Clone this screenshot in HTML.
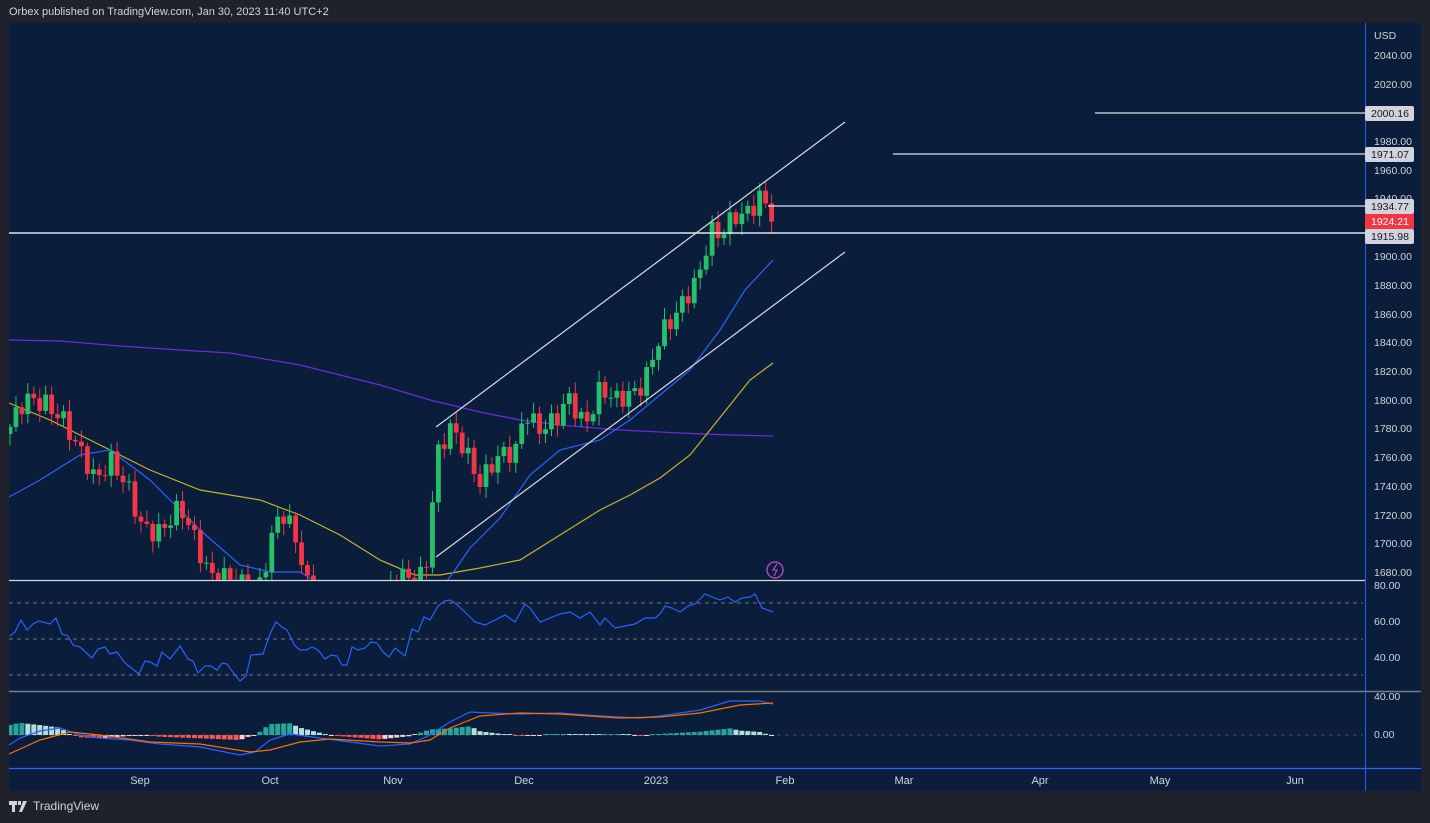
<!DOCTYPE html>
<html><head><meta charset="utf-8"><style>
html,body{margin:0;padding:0;background:#1f222c;width:1430px;height:823px;overflow:hidden;font-family:"Liberation Sans",sans-serif}
.hdr{position:absolute;left:9px;top:6px;font-size:11px;color:#d1d4dc}
.ft{position:absolute;left:9px;top:799px;font-size:12px;color:#d1d4dc;display:flex;align-items:center;gap:4px}
svg{position:absolute;left:0;top:0}
</style></head><body>
<div class="hdr">Orbex published on TradingView.com, Jan 30, 2023 11:40 UTC+2</div>
<div class="ft"><svg width="20" height="11" viewBox="0 0 20 11" style="position:static"><path d="M0 0h8v4H6v7H3V4H0z M9 0h3v4H9z M14 0h4l-5 11h-3z" fill="#d1d4dc"/></svg>TradingView</div>
<svg id="s" width="1430" height="823" xmlns="http://www.w3.org/2000/svg" font-family="Liberation Sans, sans-serif" font-size="11">
<defs><clipPath id="cp"><rect x="9" y="23" width="1356" height="557"/></clipPath>
<clipPath id="cp2"><rect x="9" y="581" width="1356" height="110"/></clipPath>
<clipPath id="cp3"><rect x="9" y="692" width="1356" height="76"/></clipPath></defs>
<rect x="9" y="23" width="1412" height="768" fill="#0a1d3a"/>
<line x1="9" y1="580.5" x2="1365" y2="580.5" stroke="#d8dbe2" stroke-width="1.2"/>
<line x1="9" y1="691.5" x2="1421" y2="691.5" stroke="#787b86" stroke-width="1.5"/>
<line x1="9" y1="768.5" x2="1421" y2="768.5" stroke="#2962ff" stroke-width="1.2"/>
<line x1="1365.5" y1="23" x2="1365.5" y2="791" stroke="#2962ff" stroke-width="1"/>
<g stroke="#787b86" stroke-dasharray="4,4" stroke-width="1">
<line x1="9" y1="603" x2="1363" y2="603"/><line x1="9" y1="639" x2="1363" y2="639"/><line x1="9" y1="675" x2="1363" y2="675"/>
<line x1="9" y1="735" x2="1363" y2="735" stroke="#4a5060"/></g>
<g clip-path="url(#cp)" fill="none">
<polyline id="ma200" stroke="#6a2bd9" stroke-width="1.3"/>
<polyline id="ma50" stroke="#c8b22a" stroke-width="1.2"/>
<polyline id="ma20" stroke="#2962ff" stroke-width="1.2"/>
<g id="candles"></g>
<line x1="436" y1="427" x2="845" y2="122" stroke="#d8dbe2" stroke-width="1.2"/>
<line x1="436" y1="557" x2="845" y2="252" stroke="#d8dbe2" stroke-width="1.2"/>
<line x1="9" y1="233" x2="1365" y2="233" stroke="#e0e3eb" stroke-width="1.5"/>
<line x1="768" y1="206" x2="1365" y2="206" stroke="#e0e3eb" stroke-width="1.2"/>
<line x1="893" y1="154" x2="1365" y2="154" stroke="#e0e3eb" stroke-width="1.2"/>
<line x1="1095" y1="113" x2="1365" y2="113" stroke="#e0e3eb" stroke-width="1.2"/>
<circle cx="775" cy="570" r="8" stroke="#ab47bc" stroke-width="1.5"/>
<path d="M777 564l-4 6h4l-3 6" stroke="#ab47bc" stroke-width="1.3"/>
</g>
<g clip-path="url(#cp2)"><polyline id="rsi" fill="none" stroke="#2962ff" stroke-width="1.2"/></g>
<g clip-path="url(#cp3)"><g id="hist"></g>
<polyline id="macd" fill="none" stroke="#2962ff" stroke-width="1.2"/>
<polyline id="sig" fill="none" stroke="#ff6d00" stroke-width="1.2"/></g>
<g fill="#d1d4dc" id="ax" font-size="10.5">
<text x="1374" y="39">USD</text>
</g>
<g fill="#d1d4dc" text-anchor="middle">
<text x="140" y="784">Sep</text><text x="270" y="784">Oct</text><text x="393" y="784">Nov</text><text x="524" y="784">Dec</text><text x="656" y="784">2023</text><text x="785" y="784">Feb</text><text x="904" y="784">Mar</text><text x="1040" y="784">Apr</text><text x="1160" y="784">May</text><text x="1295" y="784">Jun</text>
</g>
<g font-size="10.5">
<rect x="1365" y="106" width="49" height="15" rx="2" fill="#d1d4dc"/><text x="1371" y="117" fill="#131722">2000.16</text>
<rect x="1365" y="147" width="49" height="15" rx="2" fill="#d1d4dc"/><text x="1371" y="158" fill="#131722">1971.07</text>
<rect x="1365" y="199" width="49" height="15" rx="2" fill="#d1d4dc"/><text x="1371" y="210" fill="#131722">1934.77</text>
<rect x="1365" y="214" width="49" height="15" fill="#f23645"/><text x="1371" y="225" fill="#fff">1924.21</text>
<rect x="1365" y="229" width="49" height="15" rx="2" fill="#d1d4dc"/><text x="1371" y="240" fill="#131722">1915.98</text>
</g>
</svg>
<script>
const NS="http://www.w3.org/2000/svg";
function el(t,a,p){const e=document.createElementNS(NS,t);for(const k in a)e.setAttribute(k,a[k]);(p||document.getElementById('s')).appendChild(e);return e;}
function interp(P,x){if(x<=P[0][0])return P[0][1];for(let i=1;i<P.length;i++){if(x<=P[i][0]){const a=P[i-1],b=P[i];return a[1]+(b[1]-a[1])*(x-a[0])/(b[0]-a[0]);}}return P[P.length-1][1];}
function Y(p){return 233-(p-1915.98)*1.4255;}
const ax=document.getElementById('ax');
[[2040,59],[2020,88],[1980,145],[1960,174],[1940,202],[1900,260],[1880,289],[1860,318],[1840,346],[1820,375],[1800,404],[1780,432],[1760,461],[1740,490],[1720,519],[1700,547],[1680,576],[80,589],[60,625],[40,661],[40,700],[0,738]].forEach(([v,y])=>{const t=el('text',{x:1374,y:y},ax);t.textContent=v.toFixed(2);});
const path=[[10,1780],[25,1795],[45,1800],[60,1790],[75,1765],[95,1745],[110,1760],[130,1730],[140,1710],[160,1710],[180,1720],[195,1700],[210,1680],[230,1672],[255,1660],[270,1700],[280,1720],[295,1700],[310,1665],[330,1655],[360,1650],[380,1660],[410,1675],[425,1680],[437,1760],[450,1775],[465,1765],[480,1745],[495,1755],[515,1760],[525,1795],[540,1780],[555,1780],[570,1800],[585,1785],[600,1805],[615,1795],[630,1805],[645,1815],[660,1840],[670,1850],[680,1865],[690,1880],[700,1890],[710,1915],[720,1910],[735,1930],[750,1935],[760,1940],[773,1924]];
const cg=document.getElementById('candles');let prev=1775;
for(let i=0;i<=128;i++){const x=10+i*5.95;let c=interp(path,x)+7*Math.sin(i*2.3)+4*Math.sin(i*0.7);if(i==128)c=1924;
const o=prev;prev=c;const hi=Math.max(o,c)+2+Math.abs(6*Math.sin(i*1.7));const lo=Math.min(o,c)-2-Math.abs(6*Math.cos(i*1.3));
const col=c>=o?"#26c06a":"#f23645";el('line',{x1:x,x2:x,y1:Y(hi),y2:Y(lo),stroke:col,'stroke-width':1},cg);
const t=Y(Math.max(o,c)),b=Y(Math.min(o,c));el('rect',{x:x-2.4,y:t,width:4.8,height:Math.max(1,b-t),fill:col},cg);}
function pl(id,P){document.getElementById(id).setAttribute('points',P.map(p=>p.join(',')).join(' '));}
pl('ma200',[[9,340],[60,341],[120,346],[180,350],[230,353],[300,365],[380,385],[430,400],[480,412],[520,420],[560,425],[620,430],[680,433],[730,435],[773,436]]);
pl('ma50',[[9,403],[50,420],[100,445],[150,470],[200,490],[260,500],[300,515],[340,535],[380,560],[415,575],[440,575],[480,568],[520,560],[560,535],[600,510],[630,495],[660,478],[690,455],[710,430],[730,405],[750,380],[773,363]]);
pl('ma20',[[9,497],[40,480],[80,455],[110,450],[150,480],[200,530],[240,565],[270,572],[300,572],[330,590],[440,590],[455,570],[470,548],[500,518],[530,475],[560,450],[600,440],[630,420],[660,395],[690,370],[720,330],[745,290],[773,260]]);
pl('rsi',[[10,636],[15,632],[21,620],[27,630],[33,624],[39,621],[50,624],[56,618],[62,634],[68,636],[73,645],[80,647],[92,658],[98,649],[105,647],[110,654],[117,652],[125,663],[139,674],[145,661],[150,662],[157,666],[162,652],[170,659],[180,646],[188,659],[193,661],[198,673],[205,666],[211,666],[217,670],[222,663],[227,664],[235,675],[240,681],[246,676],[251,655],[263,654],[270,634],[276,622],[282,627],[287,630],[295,646],[300,650],[306,650],[312,647],[318,650],[325,659],[331,655],[337,656],[342,665],[347,665],[352,647],[358,650],[365,648],[371,642],[377,643],[383,652],[389,657],[395,648],[405,656],[412,629],[418,632],[424,617],[430,620],[438,606],[445,601],[450,600],[455,603],[465,612],[475,622],[485,625],[495,620],[505,615],[515,622],[525,604],[530,608],[540,622],[550,618],[560,614],[570,612],[580,618],[590,612],[600,625],[605,618],[615,628],[625,626],[635,624],[645,618],[655,618],[660,614],[665,606],[672,608],[680,612],[688,606],[695,604],[705,594],[712,597],[720,600],[728,597],[735,602],[742,598],[750,597],[755,594],[762,608],[773,612]]);
const M=[[9,745],[20,738],[40,731],[60,728],[80,735],[100,738],[130,740],[160,744],[200,747],[240,755],[255,752],[270,740],[290,734],[320,738],[350,742],[380,746],[410,744],[430,735],[450,722],[470,712],[490,713],[520,714],[560,713],[600,716],[640,718],[660,716],[700,710],[730,701],[760,701],[773,704]];
const S=[[9,754],[40,740],[70,732],[100,735],[150,742],[200,744],[250,752],[270,750],[300,742],[330,739],[380,742],[410,743],[430,740],[450,728],[480,716],[520,713],[560,714],[620,718],[660,717],[700,713],[740,705],[773,703]];
pl('macd',M);pl('sig',S);
const hg=document.getElementById('hist');let pd=0;
for(let i=0;i<=128;i++){const x=10+i*5.95;const d=(interp(S,x)-interp(M,x))*1.1;const up=d>=0;const grow=Math.abs(d)>=Math.abs(pd);pd=d;
const col=up?(grow?"#26a69a":"#b2dfdb"):(grow?"#ff5252":"#ffcdd2");const h=Math.max(1,Math.abs(d));
el('rect',{x:x-2.5,y:up?735-h:735,width:5,height:h,fill:col},hg);}
</script>
</body></html>
